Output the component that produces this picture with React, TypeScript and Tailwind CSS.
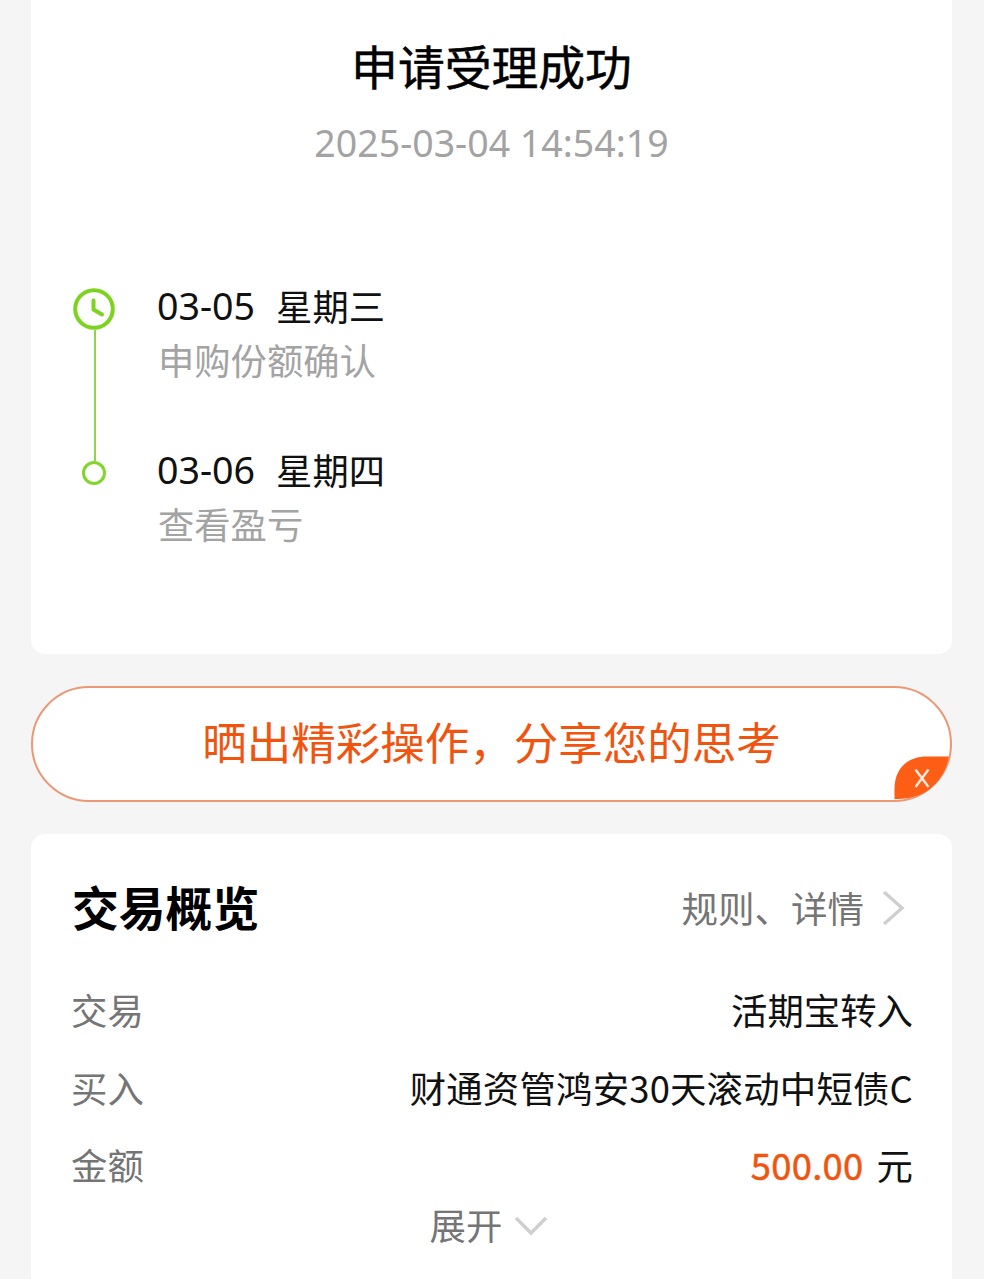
interface TimelineStep {
  date: string;
  weekday: string;
  label: string;
}

const steps: TimelineStep[] = [
  { date: '03-05', weekday: '星期三', label: '申购份额确认' },
  { date: '03-06', weekday: '星期四', label: '查看盈亏' },
];

function ClockIcon() {
  return (
    <svg width="42" height="42" viewBox="0 0 42 42" fill="none" stroke="#7ed321" strokeLinecap="round" strokeLinejoin="round">
      <circle cx="21" cy="21" r="18.8" strokeWidth="4" />
      <path d="M20.5 12.5V21.5L29 26.5" strokeWidth="4" />
    </svg>
  );
}

function StatusCard() {
  return (
    <section className="h-[654px] rounded-b-[14px] bg-white pt-[33px]">
      <h1 className="text-center text-[46.8px] leading-[64px] text-black [-webkit-text-stroke:0.5px_black]">申请受理成功</h1>
      <p className="mt-[22px] text-center font-['Noto_Sans',sans-serif] text-[37.5px] leading-[48px] text-[#a3a3a3]">
        2025-03-04 14:54:19
      </p>
      <div className="mt-[111px] flex pl-[42px]">
        <div className="flex w-[42px] flex-col items-center pt-[10px]">
          <ClockIcon />
          <div className="ml-px h-[131px] w-[2px] bg-[#8fd64a]" />
          <div className="h-6 w-6 rounded-full border-[3px] border-[#82d52a]" />
        </div>
        <ul className="flex flex-col gap-14 pl-[42px]">
          {steps.map((step) => (
            <li key={step.date}>
              <div className="flex h-[54px] items-center text-[36.3px] leading-[54px] text-[#111]">
                <span className="pt-[2px] font-['Noto_Sans',sans-serif] text-[37.6px]">{step.date}</span>
                <span className="ml-[21px]">{step.weekday}</span>
              </div>
              <div className="pl-px text-[36.3px] leading-[54px] text-[#a3a3a3]">{step.label}</div>
            </li>
          ))}
        </ul>
      </div>
    </section>
  );
}

function ShareBanner() {
  return (
    <section className="relative mt-8 flex h-[116px] items-center justify-center rounded-full border-2 border-[#eb9874] bg-white pb-[6px]">
      <span className="text-[44.5px] leading-[64px] text-[#f0540f]">晒出精彩操作，分享您的思考</span>
      <svg className="absolute right-0 bottom-0" width="56" height="44" viewBox="0 0 56 44">
        <path d="M0.5 43V33C0.5 13 13 0.5 33 0.5H55C50 26 31 43 4 43Z" fill="#fb5e14" />
        <path d="M21.5 13.5L34.5 31M34.5 13.5L21.5 31" stroke="#ffe9dc" strokeWidth="2.4" />
      </svg>
    </section>
  );
}

function OverviewCard() {
  return (
    <section className="mt-8 h-[445px] rounded-t-[14px] bg-white pr-[39px] pl-10 pt-10">
      <div className="flex h-16 items-center justify-between">
        <h2 className="pl-px text-[46.8px] leading-[64px] font-bold text-black">交易概览</h2>
        <div className="flex items-center pt-[4px] text-[36.5px] leading-[64px] text-[#757575]">
          规则、详情
          <svg className="mr-2 ml-[18px]" width="23" height="36" viewBox="0 0 23 36" fill="none" stroke="#cfcfcf" strokeWidth="3.4">
            <path d="M2 2L20 18L2 34" />
          </svg>
        </div>
      </div>
      <dl className="mt-[33px] text-[36.4px] leading-[77.5px] text-[#111]">
        <div className="flex justify-between">
          <dt className="text-[#757575]">交易</dt>
          <dd>活期宝转入</dd>
        </div>
        <div className="flex justify-between">
          <dt className="text-[#757575]">买入</dt>
          <dd className="tracking-[0.2px]">财通资管鸿安30天滚动中短债C</dd>
        </div>
        <div className="flex justify-between">
          <dt className="text-[#757575]">金额</dt>
          <dd className="flex">
            <span className="tracking-[0.3px] text-[#f0540f] [-webkit-text-stroke:0.5px_#f0540f]">500.00</span>
            <span className="ml-[13px]">元</span>
          </dd>
        </div>
      </dl>
      <div className="-mt-[7px] flex h-[54px] items-center justify-center pr-[6px] text-[36.4px] leading-[54px] text-[#757575]">
        展开
        <svg className="mt-[5px] ml-3" width="34" height="20" viewBox="0 0 34 20" fill="none" stroke="#cfcfcf" strokeWidth="3.4">
          <path d="M2 2L17 17L32 2" />
        </svg>
      </div>
    </section>
  );
}

export default function App() {
  return (
    <main className="h-[1279px] w-[984px] overflow-hidden bg-[#f5f5f5] pr-8 pl-[31px] font-['Noto_Sans_CJK_SC',sans-serif]">
      <StatusCard />
      <ShareBanner />
      <OverviewCard />
    </main>
  );
}
